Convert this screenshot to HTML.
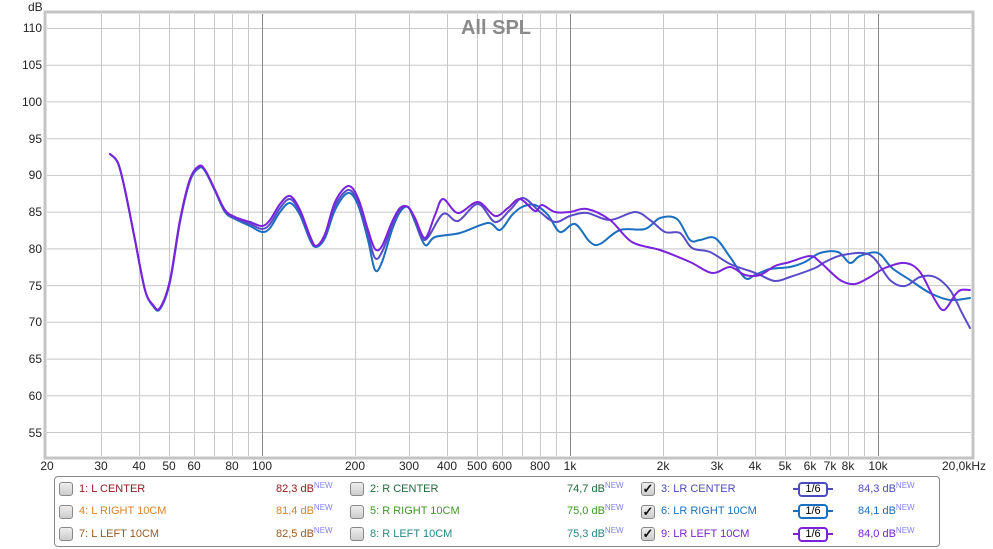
<!DOCTYPE html>
<html><head><meta charset="utf-8"><style>
body{margin:0;width:993px;height:549px;background:#fff;font-family:"Liberation Sans",sans-serif;overflow:hidden;position:relative}
.t{position:absolute;font-size:12px;white-space:nowrap}
.yl{position:absolute;font-size:12px;color:#222;right:951px;text-align:right}
.xl{position:absolute;font-size:12px;color:#222;top:459px;transform:translateX(-50%)}
.leg{position:absolute;left:54px;top:476px;width:886px;height:71px;border:1px solid #888;border-radius:4px;box-sizing:border-box}
.cb{position:absolute;width:12px;height:12px;border:1px solid #888;border-radius:3px;background:linear-gradient(#eee,#ccc)}
.ck{font-size:13px;line-height:11px;text-align:center;color:#111;font-weight:bold}
sup{font-size:8px;color:#8080f0;vertical-align:top;position:relative;top:-2px}
.lt{position:absolute;font-size:11px;white-space:nowrap}
.sm{position:absolute;width:30px;height:15px;border:2px solid;border-radius:4px;box-sizing:border-box;font-size:11px;text-align:center;line-height:11px;color:#000}
.sm:before,.sm:after{content:"";position:absolute;top:4px;width:5px;height:2px;background:currentColor}
.sm:before{left:-7px}.sm:after{right:-7px}
</style></head><body>
<svg width="993" height="549" style="position:absolute;left:0;top:0">
<rect x="45" y="12" width="928" height="446" fill="#fff" stroke="#c4c4c4" stroke-width="3"/>
<g stroke="#c8c8c8" stroke-width="1">
<line x1="47" x2="971" y1="28.5" y2="28.5"/><line x1="47" x2="971" y1="65.2" y2="65.2"/><line x1="47" x2="971" y1="101.9" y2="101.9"/><line x1="47" x2="971" y1="138.7" y2="138.7"/><line x1="47" x2="971" y1="175.4" y2="175.4"/><line x1="47" x2="971" y1="212.1" y2="212.1"/><line x1="47" x2="971" y1="248.9" y2="248.9"/><line x1="47" x2="971" y1="285.6" y2="285.6"/><line x1="47" x2="971" y1="322.3" y2="322.3"/><line x1="47" x2="971" y1="359.1" y2="359.1"/><line x1="47" x2="971" y1="395.8" y2="395.8"/><line x1="47" x2="971" y1="432.5" y2="432.5"/>
<g transform="translate(0.5,0)">
<line x1="101" x2="101" y1="14" y2="456"/><line x1="139" x2="139" y1="14" y2="456"/><line x1="169" x2="169" y1="14" y2="456"/><line x1="194" x2="194" y1="14" y2="456"/><line x1="214" x2="214" y1="14" y2="456"/><line x1="232" x2="232" y1="14" y2="456"/><line x1="248" x2="248" y1="14" y2="456"/>
<line x1="355" x2="355" y1="14" y2="456"/><line x1="409" x2="409" y1="14" y2="456"/><line x1="447" x2="447" y1="14" y2="456"/><line x1="477" x2="477" y1="14" y2="456"/><line x1="502" x2="502" y1="14" y2="456"/><line x1="522" x2="522" y1="14" y2="456"/><line x1="540" x2="540" y1="14" y2="456"/><line x1="556" x2="556" y1="14" y2="456"/>
<line x1="663" x2="663" y1="14" y2="456"/><line x1="717" x2="717" y1="14" y2="456"/><line x1="755" x2="755" y1="14" y2="456"/><line x1="785" x2="785" y1="14" y2="456"/><line x1="810" x2="810" y1="14" y2="456"/><line x1="830" x2="830" y1="14" y2="456"/><line x1="848" x2="848" y1="14" y2="456"/><line x1="864" x2="864" y1="14" y2="456"/>
</g></g>
<g stroke="#888" stroke-width="1" transform="translate(0.5,0)"><line x1="262" x2="262" y1="14" y2="456"/><line x1="570" x2="570" y1="14" y2="456"/><line x1="878" x2="878" y1="14" y2="456"/></g>
<text x="496" y="34" font-family="Liberation Sans" font-size="20" font-weight="bold" fill="#8a8a8a" text-anchor="middle">All SPL</text>
<g id="cv" fill="none" stroke-width="2" stroke-linejoin="round" stroke-linecap="round">
<polyline stroke="#1a6fc0" points="110,154 118,163 125,190 135,240 145,290 153,306 160,309 170,282 180,222 190,181 199,168 205,171 215,191 225,212 235,219 250,226 262,232 270,228 280,212 290,203 300,215 310,240 316,247 325,238 335,210 348,193 358,205 368,240 375,270 382,262 392,230 400,212 408,207 415,222 425,245 435,237 460,233 488,223 500,230 512,215 522,207 535,205 548,215 560,232 575,224 590,242 600,244 620,230 645,229 660,218 677,219 690,240 700,240 715,238 730,257 745,278 755,275 770,269 790,267 805,262 820,253 838,252 850,263 860,256 878,253 892,268 910,280 930,293 950,300 970,298"/>
<polyline stroke="#5a4cc8" points="110,154 118,163 125,190 135,240 145,290 153,305 160,308 170,281 180,221 190,180 199,167 205,170 215,190 225,211 235,218 250,224 262,229 270,224 280,208 290,199 300,212 310,238 316,246 325,236 335,206 348,190 358,202 368,235 375,258 382,252 392,226 400,210 408,207 415,220 425,240 443,214 458,221 478,204 495,222 510,210 523,198 540,212 555,222 570,216 587,213 610,220 635,212 650,220 665,232 680,233 692,248 710,252 730,264 750,271 760,275 775,281 790,277 815,268 825,262 843,255 870,255 890,280 905,286 920,277 935,277 950,290 962,313 970,328"/>
<polyline stroke="#7a22dc" points="110,154 118,163 125,190 135,240 145,290 153,305 160,308 170,280 180,220 190,179 199,166 205,170 215,190 225,210 235,217 250,222 262,226 270,220 280,204 290,196 300,210 310,236 316,246 325,234 335,202 348,186 358,198 368,230 375,249 382,246 392,222 400,208 408,207 415,218 425,238 435,215 443,199 458,213 478,202 495,216 508,208 520,199 535,211 542,205 555,212 570,212 587,209 610,220 632,242 660,250 690,262 712,273 730,267 745,275 760,275 775,266 790,262 810,256 820,262 840,280 855,284 870,277 885,268 905,263 920,272 935,300 944,310 955,295 961,290 970,290"/>
</g>
</svg>
<script>
(function(){
var NS="http://www.w3.org/2000/svg";
var pls=document.querySelectorAll("#cv polyline");
for(var k=0;k<pls.length;k++){var pl=pls[k];
var p=pl.getAttribute("points").trim().split(/\s+/).map(function(s){return s.split(",").map(Number)});
var d="M"+p[0][0]+","+p[0][1];
for(var i=0;i<p.length-1;i++){var p0=p[i-1]||p[i],p1=p[i],p2=p[i+1],p3=p[i+2]||p2;
var c1x=p1[0]+(p2[0]-p0[0])/6,c1y=p1[1]+(p2[1]-p0[1])/6,c2x=p2[0]-(p3[0]-p1[0])/6,c2y=p2[1]-(p3[1]-p1[1])/6;
d+=" C"+c1x.toFixed(1)+","+c1y.toFixed(1)+" "+c2x.toFixed(1)+","+c2y.toFixed(1)+" "+p2[0]+","+p2[1];}
var path=document.createElementNS(NS,"path");path.setAttribute("d",d);path.setAttribute("stroke",pl.getAttribute("stroke"));
pl.parentNode.replaceChild(path,pl);}
})();
</script>
<div class="t" style="left:28px;top:0px;color:#222">dB</div>
<div class="yl" style="top:21px">110</div><div class="yl" style="top:58px">105</div><div class="yl" style="top:95px">100</div><div class="yl" style="top:132px">95</div><div class="yl" style="top:168px">90</div><div class="yl" style="top:205px">85</div><div class="yl" style="top:242px">80</div><div class="yl" style="top:279px">75</div><div class="yl" style="top:315px">70</div><div class="yl" style="top:352px">65</div><div class="yl" style="top:389px">60</div><div class="yl" style="top:426px">55</div>
<div class="xl" style="left:47px">20</div><div class="xl" style="left:101px">30</div><div class="xl" style="left:139px">40</div><div class="xl" style="left:169px">50</div><div class="xl" style="left:194px">60</div><div class="xl" style="left:232px">80</div><div class="xl" style="left:262px">100</div><div class="xl" style="left:355px">200</div><div class="xl" style="left:409px">300</div><div class="xl" style="left:447px">400</div><div class="xl" style="left:477px">500</div><div class="xl" style="left:502px">600</div><div class="xl" style="left:540px">800</div><div class="xl" style="left:570px">1k</div><div class="xl" style="left:663px">2k</div><div class="xl" style="left:717px">3k</div><div class="xl" style="left:755px">4k</div><div class="xl" style="left:785px">5k</div><div class="xl" style="left:810px">6k</div><div class="xl" style="left:830px">7k</div><div class="xl" style="left:848px">8k</div><div class="xl" style="left:878px">10k</div><div class="xl" style="left:964px">20,0kHz</div>
<div class="leg"></div>
<div class="cb" style="left:59px;top:482px"></div><div class="cb" style="left:59px;top:505px"></div><div class="cb" style="left:59px;top:527px"></div>
<div class="cb" style="left:350px;top:482px"></div><div class="cb" style="left:350px;top:505px"></div><div class="cb" style="left:350px;top:527px"></div>
<div class="cb ck" style="left:641px;top:482px">✓</div><div class="cb ck" style="left:641px;top:505px">✓</div><div class="cb ck" style="left:641px;top:527px">✓</div>
<div class="lt" style="left:79px;top:483px;color:#8b1a1a">1: L CENTER</div><div class="lt" style="left:276px;top:483px;color:#8b1a1a">82,3 dB<sup>NEW</sup></div>
<div class="lt" style="left:79px;top:505px;color:#d9822b">4: L RIGHT 10CM</div><div class="lt" style="left:276px;top:505px;color:#d9822b">81,4 dB<sup>NEW</sup></div>
<div class="lt" style="left:79px;top:528px;color:#9a5a22">7: L LEFT 10CM</div><div class="lt" style="left:276px;top:528px;color:#9a5a22">82,5 dB<sup>NEW</sup></div>
<div class="lt" style="left:370px;top:483px;color:#1e6b3a">2: R CENTER</div><div class="lt" style="left:567px;top:483px;color:#1e6b3a">74,7 dB<sup>NEW</sup></div>
<div class="lt" style="left:370px;top:505px;color:#3a9a20">5: R RIGHT 10CM</div><div class="lt" style="left:567px;top:505px;color:#3a9a20">75,0 dB<sup>NEW</sup></div>
<div class="lt" style="left:370px;top:528px;color:#2a8585">8: R LEFT 10CM</div><div class="lt" style="left:567px;top:528px;color:#2a8585">75,3 dB<sup>NEW</sup></div>
<div class="lt" style="left:661px;top:483px;color:#4b4bc0">3: LR CENTER</div><div class="lt" style="left:858px;top:483px;color:#4b4bc0">84,3 dB<sup>NEW</sup></div>
<div class="lt" style="left:661px;top:505px;color:#1a70c0">6: LR RIGHT 10CM</div><div class="lt" style="left:858px;top:505px;color:#1a70c0">84,1 dB<sup>NEW</sup></div>
<div class="lt" style="left:661px;top:528px;color:#7a22d8">9: LR LEFT 10CM</div><div class="lt" style="left:858px;top:528px;color:#7a22d8">84,0 dB<sup>NEW</sup></div>
<div class="sm" style="left:798px;top:482px;border-color:#4b4bc0;color:#4b4bc0"><span style="color:#000">1/6</span></div>
<div class="sm" style="left:798px;top:504px;border-color:#1a70c0;color:#1a70c0"><span style="color:#000">1/6</span></div>
<div class="sm" style="left:798px;top:527px;border-color:#7a22d8;color:#7a22d8"><span style="color:#000">1/6</span></div>
</body></html>
